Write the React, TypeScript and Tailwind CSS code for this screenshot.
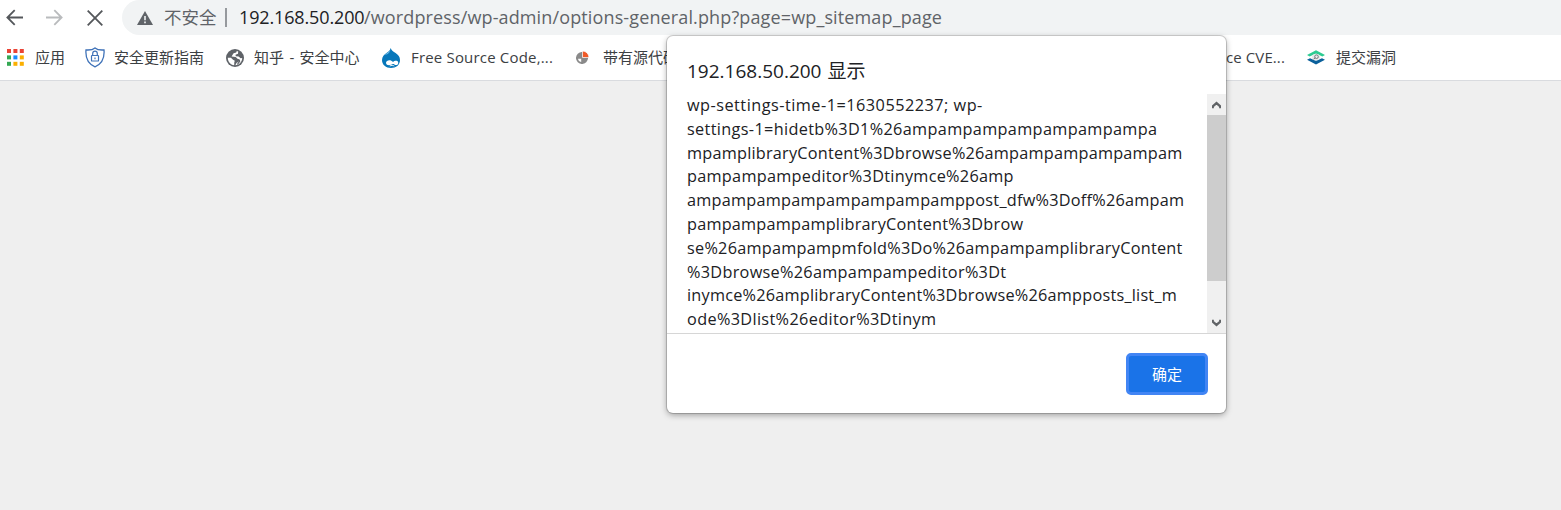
import type { ReactNode } from 'react';

const LINES: { text: string; spacing: string }[] = [
  { text: 'wp-settings-time-1=1630552237; wp-', spacing: 'tracking-[0.49px]' },
  { text: 'settings-1=hidetb%3D1%26ampampampampampampampa', spacing: 'tracking-[0.34px]' },
  { text: 'mpamplibraryContent%3Dbrowse%26ampampampampampam', spacing: 'tracking-[0.225px]' },
  { text: 'pampampampeditor%3Dtinymce%26amp', spacing: 'tracking-[0.28px]' },
  { text: 'ampampampampampampampamppost_dfw%3Doff%26ampam', spacing: 'tracking-[0.25px]' },
  { text: 'pampampampamplibraryContent%3Dbrow', spacing: 'tracking-[0.22px]' },
  { text: 'se%26ampampampmfold%3Do%26ampampamplibraryContent', spacing: 'tracking-[0.26px]' },
  { text: '%3Dbrowse%26ampampampeditor%3Dt', spacing: 'tracking-[0.3px]' },
  { text: 'inymce%26amplibraryContent%3Dbrowse%26ampposts_list_m', spacing: 'tracking-[0.23px]' },
  { text: 'ode%3Dlist%26editor%3Dtinym', spacing: 'tracking-[0.35px]' },
];

const APP_COLORS = [
  '#ea4335', '#ea4335', '#ea4335',
  '#34a853', '#1a8cff', '#fbaf00',
  '#34a853', '#fbaf00', '#fbaf00',
];

function AppsIcon() {
  return (
    <svg width="17" height="17" viewBox="0 0 17 17">
      {APP_COLORS.map((c, i) => (
        <rect key={i} x={(i % 3) * 6.4} y={Math.floor(i / 3) * 6.4} width="4" height="4" fill={c} />
      ))}
    </svg>
  );
}

function ShieldIcon() {
  return (
    <svg width="20" height="21" viewBox="0 0 20 21" fill="none" stroke="#3f72b8">
      <path d="M10 .9C8 2.6 4.600 3.200 1 2.900C.4 10 1.500 16.300 10 19.800C18.500 16.300 19.600 10 19 2.900C15.400 3.200 12 2.600 10 .9Z" strokeWidth="1.300" />
      <rect x="6.500" y="8.500" width="7" height="5.500" rx=".6" strokeWidth="1.200" />
      <path d="M7.700 8.500V6.500a2.300 2.300 0 0 1 4.600 0v2M10 10.500v1.700" strokeWidth="1.200" />
    </svg>
  );
}

function GlobeIcon() {
  return (
    <svg width="18" height="18" viewBox="0 0 18 18">
      <circle cx="9" cy="9" r="9" fill="#5f6368" />
      <path d="M10.800 1.900L10.200 3.600L7.600 4.300L6.300 6.300L5.600 7.500L9.700 8L11.500 9.800L13.500 10.500L12.700 12.700L10.700 13.700L9.300 16.200C13 16.200 16.200 13 16.200 9L14.600 9.200L12.600 7.500L9.800 7.200L9.500 5.700L12 4.700L12.200 2.500Z" fill="#fff" />
      <path d="M13.300 3.300L12.800 5.200L10.600 6L13.200 6.800L14.800 8L16.200 8.200A7.200 7.200 0 0 0 13.300 3.300ZM12 10.500L13.900 10.700L14.300 12.500L12.200 15.200L11 16L11.500 13.900L12.900 12.500Z" fill="#5f6368" />
      <path d="M1.800 8.700H5L7 10.700L8.800 11.800L8.300 13.200L8.200 16.200C4.500 15.700 1.800 12.500 1.800 8.700Z" fill="#fff" />
    </svg>
  );
}

function DropIcon() {
  return (
    <svg width="18" height="20" viewBox="0 0 18 20">
      <path d="M8.700 0C9.500 2.700 11.400 3.500 13.600 5.100C16.300 7 18 9 18 12C18 17 14 20 9 20C4 20 0 16.800 0 12C0 8.500 2.300 6.300 4.500 4.900C6.400 3.700 8 2.600 8.700 0Z" fill="#0777ba" />
      <path d="M8.400 1.800C7.500 3.800 4.500 5 2.600 7.200C4.700 6.500 7.600 5.800 8.400 1.800Z" fill="#72bde8" />
      <path d="M4 14.800c.3-3 4.800-3.400 7-.9 1.500-1.500 4.500-1.900 5.200.3.400 2-1.200 3.500-3 2.700-1-.4-1.500-1.300-2.500-.8C8.800 17.500 4.300 18.200 4 14.800Z" fill="#fff" />
      <path d="M7.800 18c1.600-.8 3.200-.8 4.500 0" fill="none" stroke="#fff" strokeWidth=".9" />
    </svg>
  );
}

function PieIcon() {
  return (
    <svg width="13" height="13" viewBox="0 0 13 13">
      <circle cx="6" cy="7" r="5" fill="none" stroke="#8a8a8a" strokeWidth="2" />
      <path d="M6 1V13M0 7H12" stroke="#8a8a8a" strokeWidth="1.600" />
      <path d="M6 7H1A5 5 0 0 1 6 2ZM6 7h5a5 5 0 0 1-5 5Z" fill="#8a8a8a" />
      <path d="M6.500 6.500V0A6.500 6.500 0 0 1 13 6.500Z" fill="#f05a28" stroke="#fff" strokeWidth=".7" />
    </svg>
  );
}

function LayersIcon() {
  return (
    <svg width="18" height="15" viewBox="0 0 18 15">
      <path d="M0 9.800L3 8.300L9 10.800L15 8.300L18 9.800L9 14.600Z" fill="#0b609b" />
      <path d="M0 5L9 .2L18 5L15.300 6.500L9 3.500L2.700 6.500Z" fill="#2dcb91" />
      <ellipse cx="9" cy="7.200" rx="4.200" ry="3.100" fill="#e6eaeb" />
      <circle cx="9.500" cy="6.700" r="1.800" fill="none" stroke="#74787b" strokeWidth="1" />
      <path d="M8.200 7.900L6.500 9.200" stroke="#74787b" />
    </svg>
  );
}

function Bookmark({ icon, children, className }: { icon: ReactNode; children: ReactNode; className: string }) {
  return (
    <div className={`flex shrink-0 items-center whitespace-nowrap ${className}`}>
      {icon}
      <span>{children}</span>
    </div>
  );
}

function Toolbar() {
  return (
    <header className="flex h-[35px] items-stretch bg-white">
      <nav className="flex w-[122px] shrink-0 items-center pl-[6px]">
        <svg width="17" height="17" viewBox="0 0 17 17" fill="none" stroke="#54575b" strokeWidth="1.800">
          <path d="M17 8.500H1.500M8.700 1.200L1.400 8.500l7.300 7.300" />
        </svg>
        <svg className="ml-[23px]" width="17" height="17" viewBox="0 0 17 17" fill="none" stroke="#b9bbbd" strokeWidth="1.800">
          <path d="M0 8.500H15.500M8.300 1.200l7.300 7.300-7.300 7.300" />
        </svg>
        <svg className="ml-[23.500px]" width="16" height="16" viewBox="0 0 16 16" fill="none" stroke="#54575b" strokeWidth="1.800">
          <path d="M.7.7l14.600 14.600M15.300.7L.7 15.300" />
        </svg>
      </nav>
      <div className="flex flex-1 items-center rounded-bl-[18px] rounded-tl-[18px] bg-[#f1f3f4] pl-[15px] text-[18px] text-[#5f6368]">
        <svg width="16" height="14" viewBox="0 0 16 14">
          <path d="M8 0l8 14H0Z" fill="#5f6368" />
          <path d="M8 5v4.300M8 10.600v1.600" stroke="#f1f3f4" strokeWidth="1.600" />
        </svg>
        <span className="ml-[11px] w-[61px] text-[17.5px] leading-none">不安全</span>
        <span className="h-[19px] w-[2px] bg-[#96999d]" />
        <span className="ml-[12px] w-[125px] tracking-[-0.14px] text-[#202124]">192.168.50.200</span>
        <span className="whitespace-nowrap tracking-[0.13px]">/wordpress/wp-admin/options-general.php?page=wp_sitemap_page</span>
      </div>
    </header>
  );
}

function BookmarksBar() {
  return (
    <div className="flex h-[46px] items-center border-b border-[#d9dbdf] bg-white pl-[7px] text-[15px] text-[#3c4043]">
      <Bookmark icon={<AppsIcon />} className="w-[78px] gap-[11px]">应用</Bookmark>
      <Bookmark icon={<ShieldIcon />} className="w-[141px] gap-[9px]">安全更新指南</Bookmark>
      <Bookmark icon={<GlobeIcon />} className="w-[156px] gap-[10px] [word-spacing:1.5px]">知乎 - 安全中心</Bookmark>
      <Bookmark icon={<DropIcon />} className="w-[194px] gap-[11px] tracking-[0.18px]">Free Source Code,...</Bookmark>
      <Bookmark icon={<PieIcon />} className="w-[624px] gap-[14px]">带有源代码</Bookmark>
      <span className="w-[107px] shrink-0 whitespace-nowrap pl-[26px] tracking-[0.1px]">ce CVE...</span>
      <Bookmark icon={<LayersIcon />} className="gap-[11px]">提交漏洞</Bookmark>
    </div>
  );
}

function AlertDialog() {
  return (
    <section
      role="alertdialog"
      className="absolute left-[667px] top-[36px] flex h-[377px] w-[559px] flex-col overflow-hidden rounded-[6px] bg-white text-[#202124] shadow-[0_0_0_1px_rgba(0,0,0,0.16),0_2px_6px_rgba(0,0,0,0.35)]"
    >
      <h1 className="h-[58px] shrink-0 pl-[20px] pt-[20px] text-[19px] leading-[30px] [word-spacing:1px]">192.168.50.200 显示</h1>
      <div className="flex h-[240px] shrink-0 border-b border-[#d6d6d6]">
        <div className="flex-1 overflow-hidden pl-[20px] text-[16.25px] leading-[23.8px]">
          {LINES.map((line) => (
            <p key={line.text} className={`whitespace-nowrap ${line.spacing}`}>{line.text}</p>
          ))}
        </div>
        <div className="flex w-[19px] flex-col items-center bg-[#f0f0f0]">
          <div className="flex h-[21px] items-center justify-center">
            <svg width="9" height="8" viewBox="0 0 10 8" fill="none" stroke="#606366" strokeWidth="2.600">
              <path d="M.8 7.500V5.600L5 1.900l4.200 3.700V7.500" />
            </svg>
          </div>
          <div className="h-[166px] w-[19px] bg-[#cdcdcd]" />
          <div className="mt-auto flex h-[20px] items-center justify-center">
            <svg width="9" height="8" viewBox="0 0 10 8" fill="none" stroke="#606366" strokeWidth="2.600">
              <path d="M.8.5v1.900L5 6.100l4.200-3.700V.5" />
            </svg>
          </div>
        </div>
      </div>
      <footer className="flex justify-end pr-[18px] pt-[19px]">
        <button className="h-[42px] w-[82px] rounded-[5px] border-[3px] border-[#4285f4] bg-[#1a73e8] text-[15px] leading-none text-white">确定</button>
      </footer>
    </section>
  );
}

export default function App() {
  return (
    <main className="relative h-[510px] w-[1561px] overflow-hidden bg-[#efefef] font-['Open_Sans','Noto_Sans_CJK_SC',sans-serif]">
      <Toolbar />
      <BookmarksBar />
      <AlertDialog />
    </main>
  );
}
